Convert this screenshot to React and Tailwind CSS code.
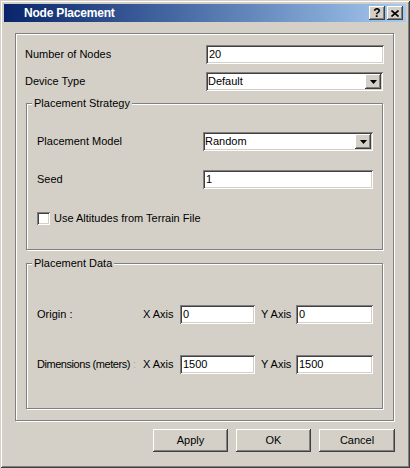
import React from 'react';

const raised = 'bg-[#d4d0c8] shadow-[inset_-1px_-1px_#404040,inset_1px_1px_#fff,inset_-2px_-2px_#808080]';
const sunken = 'bg-white shadow-[inset_1px_1px_#808080,inset_-1px_-1px_#fff,inset_2px_2px_#404040,inset_-2px_-2px_#d4d0c8]';
const etched = 'border border-[#808080] shadow-[inset_1px_1px_#fff,1px_1px_#fff]';

const TextBox = ({ value, width }) => (
  <div className={`h-[19px] flex items-center pl-[3px] ${sunken}`} style={{ width }}>
    <span>{value}</span>
  </div>
);

const Combo = ({ value, width }) => (
  <div className={`h-[19px] flex p-[2px] ${sunken}`} style={{ width }}>
    <span className="flex-1 flex items-center">{value}</span>
    <div className={`w-[16px] flex items-center justify-center ${raised}`}>
      <svg width="7" height="4" viewBox="0 0 7 4">
        <polygon points="0,0 7,0 3.5,4" fill="#000" />
      </svg>
    </div>
  </div>
);

const GroupBox = ({ title, className, children }) => (
  <div className={`relative ${etched} ${className}`}>
    {title && (
      <span className="absolute left-[5px] top-[-8px] leading-[14px] px-[2px] bg-[#d4d0c8]">{title}</span>
    )}
    {children}
  </div>
);

const Button = ({ label, w }) => (
  <div className={`h-[23px] flex items-center justify-center ${raised} ${w}`}>{label}</div>
);

export default function App() {
  return (
    <div className="w-[410px] h-[468px] bg-[#d4d0c8] p-[4px] flex flex-col text-[11px] text-black font-['Liberation_Sans',Arial,sans-serif] shadow-[inset_1px_1px_#d4d0c8,inset_-1px_-1px_#404040,inset_2px_2px_#fff,inset_-2px_-2px_#808080]">
      {/* title bar */}
      <div className="h-[18px] flex items-center pl-[20px] pr-[3px] bg-linear-to-r from-[#0a246a] to-[#a6caf0]">
        <span className="flex-1 text-white font-bold text-[12px] tracking-[-0.2px]">Node Placement</span>
        <div className={`w-[16px] h-[14px] flex items-center justify-center font-bold text-[12px] leading-none ${raised}`}>?</div>
        <div className={`w-[16px] h-[14px] ml-[2px] flex items-center justify-center ${raised}`}>
          <svg width="8" height="7" viewBox="0 0 8 7">
            <path d="M0.5 0.5 L7.5 6.5 M7.5 0.5 L0.5 6.5" stroke="#000" strokeWidth="1.6" />
          </svg>
        </div>
      </div>

      <GroupBox className="ml-[11px] mt-[11px] w-[379px] h-[388px]">
        <div className="mt-[11px] pl-[9px] flex items-center">
          <span className="w-[181px]">Number of Nodes</span>
          <TextBox value="20" width={178} />
        </div>
        <div className="mt-[8px] pl-[9px] flex items-center">
          <span className="w-[181px]">Device Type</span>
          <Combo value="Default" width={177} />
        </div>

        <GroupBox title="Placement Strategy" className="ml-[10px] mt-[12px] w-[357px] h-[147px]">
          <div className="mt-[28px] pl-[10px] flex items-center">
            <span className="w-[166px]">Placement Model</span>
            <Combo value="Random" width={170} />
          </div>
          <div className="mt-[19px] pl-[10px] flex items-center">
            <span className="w-[166px]">Seed</span>
            <TextBox value="1" width={170} />
          </div>
          <div className="mt-[21px] pl-[10px] flex items-center">
            <div className={`w-[13px] h-[13px] ${sunken}`} />
            <span className="ml-[4px]">Use Altitudes from Terrain File</span>
          </div>
        </GroupBox>

        <GroupBox title="Placement Data" className="ml-[10px] mt-[13px] w-[357px] h-[146px]">
          <div className="mt-[41px] pl-[10px] flex items-center">
            <span className="w-[106px] whitespace-nowrap">Origin :</span>
            <span className="w-[37px]">X Axis</span>
            <TextBox value="0" width={75} />
            <span className="ml-[6px] w-[35px]">Y Axis</span>
            <TextBox value="0" width={77} />
          </div>
          <div className="mt-[31px] pl-[10px] flex items-center">
            <span className="w-[106px] whitespace-nowrap flex">
              <span className="tracking-[-0.45px]">Dimensions (meters)</span>
              <span className="ml-[3px] text-[#b4ad9c]">:</span>
            </span>
            <span className="w-[37px]">X Axis</span>
            <TextBox value="1500" width={75} />
            <span className="ml-[6px] w-[35px]">Y Axis</span>
            <TextBox value="1500" width={77} />
          </div>
        </GroupBox>
      </GroupBox>

      <div className="ml-[11px] mt-[8px] w-[380px] flex justify-end gap-[8px]">
        <Button label="Apply" w="w-[75px]" />
        <Button label="OK" w="w-[75px]" />
        <Button label="Cancel" w="w-[76px]" />
      </div>
    </div>
  );
}
